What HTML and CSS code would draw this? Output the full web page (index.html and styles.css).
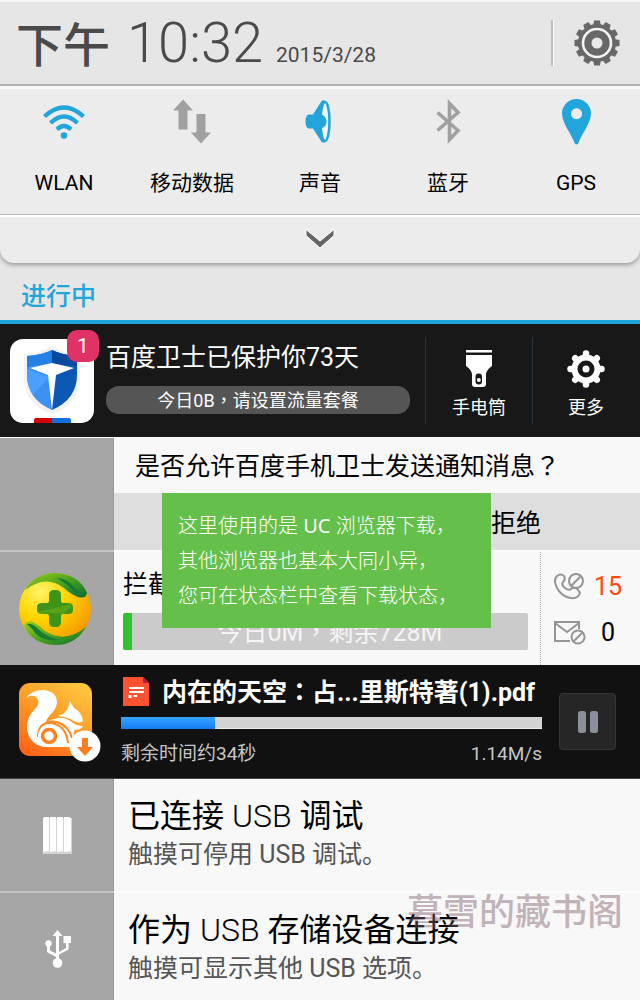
FILE: index.html
```html
<!DOCTYPE html>
<html lang="zh-CN">
<head>
<meta charset="utf-8">
<meta name="viewport" content="width=device-width, initial-scale=1">
<title>通知中心</title>
<link rel="stylesheet" href="styles.css">
</head>
<body>
<main class="shade">
  <header class="clock-bar">
    <span class="ampm">下午</span>
    <time class="clock">10:32</time>
    <span class="date">2015/3/28</span>
    <button class="settings" type="button" aria-label="设置">
      <svg width="46" height="46" viewBox="-23 -23 46 46">
        <g fill="#686868">
          <circle r="19"/>
          <g id="teeth"><path id="tooth" d="M-3.700-18l.8-4.500h5.800l.8 4.500z"/>
          <use href="#tooth" transform="rotate(30)"/><use href="#tooth" transform="rotate(60)"/></g>
          <use href="#teeth" transform="rotate(90)"/><use href="#teeth" transform="rotate(180)"/><use href="#teeth" transform="rotate(270)"/>
        </g>
        <circle r="14" fill="#686868" stroke="#f4f4f4" stroke-width="2.600"/>
        <circle r="5.500" fill="#e8e8e8"/>
      </svg>
    </button>
  </header>

  <section class="panel">
    <div class="toggles">
      <button class="toggle" type="button">
        <svg width="48" height="48" viewBox="0 0 48 48" fill="none" stroke="#22a5da" stroke-width="4.400">
          <path d="M4.500 15.500Q24-2.500 43.500 15.500"/><path d="M10.500 22Q24 9 37.500 22"/><path d="M17 28.500Q24 21.500 31 28.500"/><circle cx="24" cy="34.500" r="3.300" fill="#22a5da" stroke="none"/>
        </svg>
        <span>WLAN</span>
      </button>
      <button class="toggle" type="button">
        <svg width="48" height="48" viewBox="0 0 48 48" fill="#a0a0a0"><path d="M15-1.500l10 11h-5.500v19h-9v-19H5z"/><path d="M28.500 13h9v18.500H43l-10 11-10-11h5.500z"/></svg>
        <span>移动数据</span>
      </button>
      <button class="toggle" type="button">
        <svg width="48" height="48" viewBox="0 0 48 48"><path d="M12.500 13.500H17L26-.5h3v42h-3l-9-14h-4.500q-3-1-3-7t3-7z" fill="#22a5da"/><ellipse cx="29" cy="20.500" rx="4.500" ry="19.500" fill="#f4f6f7" stroke="#22a5da" stroke-width="2.500"/><path d="M24.500 14h2q4 2.500 4 6.500t-4 6.500h-2z" fill="#22a5da"/></svg>
        <span>声音</span>
      </button>
      <button class="toggle" type="button">
        <svg width="48" height="48" viewBox="0 0 48 48" fill="none" stroke="#a0a0a0" stroke-width="3.600"><path d="M13.500 11.500l20.500 18-8.500 9V2.500l8.500 9-20.500 18"/></svg>
        <span>蓝牙</span>
      </button>
      <button class="toggle" type="button">
        <svg width="48" height="48" viewBox="0 0 48 48"><path fill="#22a5da" fill-rule="evenodd" d="M24.500-2A14.500 14.500 0 0 1 39 12.500C39 22 28.500 35 26.500 42q-2 3-4 0C20.500 35 10 22 10 12.500A14.500 14.500 0 0 1 24.500-2zM24.500 7.200a5.500 5.500 0 1 0 .1 0z"/></svg>
        <span>GPS</span>
      </button>
    </div>
    <button class="expand" type="button" aria-label="展开">
      <svg width="30" height="20" viewBox="0 0 30 20"><path d="M1 .5l14 11.500L29 .5v6L15 19 1 6.500z" fill="#666" stroke="#fff" stroke-width="1"/></svg>
    </button>
  </section>

  <h2 class="section-title">进行中</h2>

  <section class="guard">
    <div class="guard-icon">
      <svg width="84" height="84" viewBox="0 0 84 84">
        <rect width="84" height="84" rx="13" fill="#fff"/>
        <path d="M42 7q11 7 28 8v27q-2 24-28 33-26-9-28-33V15q17-1 28-8z" fill="#f1f2f4"/>
        <path d="M42 11v60Q17 60 17 36V17q15-1 25-6z" fill="#3d91f0"/>
        <path d="M42 11v60q25-11 25-35V17q-15-1-25-6z" fill="#0b58b5"/>
        <path d="M42 11v13L17 28V17q15-1 25-6z" fill="#2580e4"/><path d="M42 11v13l25 4V17q-15-1-25-6z" fill="#084b9e"/>
        <path d="M17 30l22 8-16 18q-6-9-6-20z" fill="#4ba0ff"/>
        <path d="M20 29l22-5 22 5-18 7-4 35-4-35z" fill="#fff"/>
        <path d="M24 84v-3q0-2 2-2h16v5z" fill="#d50000"/><path d="M42 79h17q2 0 2 2v3H42z" fill="#1470dc"/>
      </svg>
      <span class="badge">1</span>
    </div>
    <div class="guard-text">
      <p class="line">百度卫士已保护你73天</p>
      <p class="pill">今日0B<span class="mid" lang="zh-Hant">，</span>请设置流量套餐</p>
    </div>
    <button class="action" type="button">
      <svg width="40" height="40" viewBox="0 0 40 40"><path d="M7 1h26v2.500H7zM7 6h26v11q-6 4-6 9v9q0 3-3 3h-8q-3 0-3-3v-9q0-5-6-9z" fill="#fff"/><rect x="16.500" y="24.500" width="6.500" height="11" rx="3.200" fill="#181818"/><circle cx="19.800" cy="31" r="2" fill="#fff"/></svg>
      <span>手电筒</span>
    </button>
    <button class="action" type="button">
      <svg width="40" height="40" viewBox="-20 -20 40 40"><g stroke="#fff" stroke-width="6.500" stroke-linecap="round"><path d="M0-15.500v31M-15.500 0h31M-10.800-10.800l21.600 21.600M10.800-10.800l-21.600 21.600"/></g><circle r="14.500" fill="#fff"/><circle r="6" fill="#fff" stroke="#181818" stroke-width="5"/></svg>
      <span>更多</span>
    </button>
  </section>

  <section class="row ask">
    <div class="side"></div>
    <div class="ask-body">
      <p class="question">是否允许百度手机卫士发送通知消息<span class="mid" lang="zh-Hant">？</span></p>
      <button class="deny" type="button">拒绝</button>
    </div>
    <aside class="tip">
      <p>这里使用的是 <span class="latin">UC</span> 浏览器下载，</p>
      <p>其他浏览器也基本大同小异，</p>
      <p>您可在状态栏中查看下载状态，</p>
    </aside>
  </section>

  <section class="row block">
    <div class="side">
      <svg width="74" height="74" viewBox="0 0 74 74">
        <defs><radialGradient id="gold" cx=".3" cy=".25" r=".8"><stop offset="0" stop-color="#fff36b"/><stop offset=".45" stop-color="#fdd800"/><stop offset="1" stop-color="#f59a00"/></radialGradient>
        <linearGradient id="leaf" x2="1" y2="1"><stop offset="0" stop-color="#9bcc1c"/><stop offset=".6" stop-color="#3b9a20"/><stop offset="1" stop-color="#0c6a37"/></linearGradient></defs>
        <circle cx="37" cy="37" r="36" fill="url(#gold)"/>
        <path d="M7 18Q17 1 37 1q24 1 32 20-1 6-9 4-8-3-14-9Q28 2 7 18z" fill="url(#leaf)"/>
        <path d="M38 6q10 0 17 8 5 6 12 8-4 3-10-1Q48 10 38 6z" fill="#187a32"/>
        <path d="M6 54q2-6 9-4 6 3 12 9 20 13 41-4Q58 73 37 73 14 72 6 54z" fill="url(#leaf)"/>
        <path d="M9 52q5-1 10 4 9 9 22 12-14 2-23-6-3-5-9-10z" fill="#187a32"/>
        <path d="M36 18h2q5 0 5 5v6q0 2 2 2h5q5 0 5 4v3q0 4-5 4h-5q-2 0-2 2v6q0 5-5 5h-2q-5 0-5-5v-6q0-2-2-2h-5q-5 0-5-4v-3q0-4 5-4h5q2 0 2-2v-6q0-5 5-5z" fill="#3f9418"/>
        <path d="M20 40l33-8v3l-8 7-14-1-7 1q-4 0-4-2z" fill="#82c01b" opacity=".35"/>
      </svg>
    </div>
    <div class="block-body">
      <p class="line">拦截</p>
      <div class="quota"><span>今日0M<span class="mid" lang="zh-Hant">，</span>剩余728M</span></div>
    </div>
    <div class="counts">
      <svg width="32" height="30" viewBox="0 0 32 30" fill="none" stroke="#959595" stroke-width="2"><path d="M3 4q4-3 7 0 2 3-1 6-2 3 2 6t6 1q4-3 7 1l2 3q-2 6-9 5Q8 25 3 16-1 8 3 4z"/><circle cx="22" cy="9" r="7"/><path d="M17 14L27 4"/></svg>
      <span class="hot">15</span>
      <svg width="32" height="30" viewBox="0 0 32 30" fill="none" stroke="#959595" stroke-width="2"><path d="M16 23H1V4h24v7M1 5l12 9L25 5"/><circle cx="24" cy="19" r="6.500"/><path d="M19 24l10-10"/></svg>
      <span>0</span>
    </div>
  </section>

  <section class="download">
    <div class="uc">
      <svg width="82" height="82" viewBox="0 0 82 82">
        <defs><linearGradient id="uc" x1=".8" y1="0" x2=".2" y2="1"><stop offset="0" stop-color="#ffc640"/><stop offset=".5" stop-color="#ff9a25"/><stop offset="1" stop-color="#ff6418"/></linearGradient></defs>
        <rect width="73" height="73" rx="11" fill="url(#uc)"/>
        <path d="M7 15Q13 7 24 7q14 1 14 13-1 6-6 11-5 5-5 9 6-5 14-4 10 1 15 10-2 9-5 18H24Q10 60 8 46 7 34 17 25q5-6 0-11-4-3-10 1z" fill="#fff"/>
        <path d="M39 33q8-3 10-8l2-7 4 7q8 4 9 13-4 3-9 0-6-4-16-5z" fill="#fff"/>
        <path d="M36 35q12-1 18 5 4 3 10 3-2 4-8 4-6-8-20-12z" fill="#fff"/>
        <path d="M19 54q0-15 13-14 15 2 17 20M22 43q8-6 16-4 12 4 15 16" fill="none" stroke="#ff8a22" stroke-width="2"/>
        <circle cx="30" cy="53" r="11" fill="#fff"/><circle cx="30" cy="53" r="6.500" fill="none" stroke="#ff801f" stroke-width="3.500"/>
        <circle cx="66" cy="63" r="15.500" fill="#fff"/><path d="M63 55h6v9h5l-8 9-8-9h5z" fill="#ff7d22"/>
      </svg>
    </div>
    <div class="dl-body">
      <div class="dl-title">
        <svg width="26" height="29" viewBox="0 0 26 29"><path d="M0 0h20l6 6v23H0z" fill="#ff5230"/><path d="M20 0l6 6h-6z" fill="#b31c3c"/><path d="M6 11h15M6 15h15M10.500 19H14" stroke="#fff" stroke-width="2"/><path d="M5.500 18h3v3h-3z" fill="#fff"/></svg>
        <strong>内在的天空<span class="mid" lang="zh-Hant">：</span>占...里斯特著(1).pdf</strong>
      </div>
      <div class="bar" role="progressbar" aria-label="下载进度" aria-valuenow="22"><div class="fill" style="width:22.4%"></div></div>
      <div class="dl-info"><span>剩余时间约34秒</span><span>1.14M/s</span></div>
    </div>
    <button class="pause" type="button" aria-label="暂停">
      <svg width="20" height="22" viewBox="0 0 20 22" fill="#8a9099"><rect width="8" height="22" rx="2.500"/><rect x="12" width="8" height="22" rx="2.500"/></svg>
    </button>
  </section>

  <section class="row usb">
    <div class="side">
      <svg width="30" height="38" viewBox="0 0 30 38"><path fill="#d5d5d5" d="M1 2h29v36H1z"/><path fill="#fff" d="M1 3q0-2 2-2h4v34l-6 1zM8 1h6v34l-6 1zM15 1h6v34l-6 1zM22 1h4q3 0 3 2v32l-7 1z"/></svg>
    </div>
    <div class="usb-body"><h3>已连接 <span>USB</span> 调试</h3><p>触摸可停用 USB 调试。</p></div>
  </section>

  <section class="row usb">
    <div class="side">
      <svg width="28" height="38" viewBox="0 0 28 38" fill="#fff"><path d="M14.500 0l5 6H16v16l7-4v-5h-2.500V6H28v7h-2.500v6.500L16 24.500V31h-3v-4l-9-5v-6h3v4.500l6 3V6H9.500z"/><circle cx="5.500" cy="13.500" r="3.200"/><circle cx="14.500" cy="33" r="4.800"/></svg>
    </div>
    <div class="usb-body"><h3>作为 <span>USB</span> 存储设备连接</h3><p>触摸可显示其他 USB 选项。</p></div>
    <span class="watermark">暮雪的藏书阁</span>
  </section>
</main>
</body>
</html>
```
FILE: styles.css
```css
* { box-sizing: border-box; }
body, p, h2, h3 { margin: 0; }
body {
  background: #e6e6e6;
  color: #000;
  font-family: Roboto, "Noto Sans CJK SC", sans-serif;
  overflow-x: hidden;
}
button { border: 0; padding: 0; background: none; color: inherit; font: inherit; }
svg { display: block; flex: none; overflow: visible; }
.mid { font-family: "Noto Sans CJK TC", sans-serif; }
.shade { height: 100vh; overflow: hidden; }

.clock-bar {
  display: flex;
  align-items: baseline;
  height: 86px;
  padding: 0 20px 0 16px;
  border-top: 2px solid #f6f6f6;
  border-bottom: 2px solid #b4b4b4;
  color: #4a4a4a;
  line-height: 82px;
}
.ampm { font-size: 47px; font-weight: 500; }
.clock { margin-left: 17px; font-size: 56px; font-weight: 300; }
.date { margin-left: 13px; font-size: 21px; }
.settings {
  align-self: center;
  margin-left: auto;
  padding-left: 21px;
  border-left: 2px solid #bdbdbd;
  box-shadow: inset 1px 0 #fff;
}

.panel {
  background: #ececec;
  border-top: 3px solid #f9f9f9;
  border-radius: 0 0 14px 14px;
  box-shadow: 0 2px 4px #999;
}
.toggles {
  display: grid;
  grid-template-columns: repeat(5, 1fr);
  height: 126px;
  padding-top: 12px;
  border-bottom: 1px solid #b9b9b9;
}
.toggle {
  display: flex;
  flex-direction: column;
  align-items: center;
  gap: 18px;
  font-size: 21px;
  line-height: 32px;
}
.expand {
  display: flex;
  justify-content: center;
  align-items: center;
  width: 100%;
  height: 48px;
  padding-bottom: 3px;
  border-top: 2px solid #fff;
}
.section-title {
  padding: 15px 21px 5px;
  border-bottom: 4px solid #1fa4dc;
  color: #22a5da;
  font-size: 25px;
  font-weight: 500;
  line-height: 37px;
}

.guard {
  display: flex;
  align-items: center;
  height: 113px;
  padding: 0 1px 0 10px;
  background: #181818;
  color: #fff;
}
.guard-icon { position: relative; }
.badge {
  position: absolute;
  top: -9px;
  right: -5px;
  width: 32px;
  border-radius: 10px;
  background: #e03264;
  font-size: 21px;
  line-height: 32px;
  text-align: center;
}
.guard-text { flex: 1; padding: 0 15px 4px 12px; }
.line { font-size: 25px; line-height: 36px; white-space: nowrap; }
.guard .line { margin-top: -4px; }
.pill {
  margin-top: 10px;
  border-radius: 13px;
  background: #555;
  font-size: 18px;
  line-height: 26px;
  text-align: center;
}
.action {
  display: flex;
  flex-direction: column;
  align-items: center;
  gap: 6px;
  width: 107px;
  height: 87px;
  padding-top: 12px;
  border-left: 1px solid #26333d;
  font-size: 18px;
  line-height: 26px;
}

.row { position: relative; display: flex; height: 114px; background: #f8f8f8; border-bottom: 2px solid #fdfdfd; }
.side {
  display: flex;
  justify-content: center;
  align-items: center;
  flex: none;
  width: 114px;
  border-right: 1px solid #989898;
  background: #a6a6a6;
}
.row + .row .side { box-shadow: 0 -2px #c4c4c4; }
.ask { height: 115px; border-top: 1px solid #fff; }
.ask-body { display: flex; flex-direction: column; flex: 1; }
.question { padding-left: 21px; font-size: 25px; line-height: 53px; white-space: nowrap; }
.deny { flex: 1; padding: 0 0 2px 377px; background: #dedede; font-size: 25px; text-align: left; }
.tip {
  position: absolute;
  z-index: 1;
  top: 55px;
  left: 162px;
  width: 329px;
  padding: 15px 0 15px 16px;
  background: #65bf4b;
  color: #fff;
  font-family: "Noto Sans", "Noto Sans CJK SC", sans-serif;
  font-size: 20px;
  font-weight: 300;
  line-height: 35px;
  white-space: nowrap;
}
.latin { font-weight: 400; }

.block { height: 113px; border-bottom: 0; }
.block .side { padding-right: 4px; }
.block-body { flex: 1; padding: 15px 12px 0 9px; }
.quota {
  margin-top: 10px;
  border-left: 9px solid #30c330;
  border-radius: 2px;
  background: #cbcbcb;
  color: #f5f5f5;
  font-size: 25px;
  line-height: 35px;
  text-align: center;
}
.counts {
  display: grid;
  grid-template-columns: 32px 1fr;
  gap: 14px 0;
  align-content: center;
  align-items: center;
  width: 100px;
  padding: 2px 18px 0 13px;
  border-left: 1px dotted #aaa;
  font-size: 25px;
  line-height: 32px;
  text-align: center;
}
.counts span { padding-left: 8px; }
.hot { color: #ff4a0a; }

.download {
  display: flex;
  align-items: center;
  height: 114px;
  padding: 0 24px 0 19px;
  border-bottom: 1px solid #444;
  background: #111;
  color: #fff;
}
.uc { width: 102px; padding-top: 4px; }
.dl-body { flex: 1; min-width: 0; padding-bottom: 3px; }
.dl-title { display: flex; align-items: center; gap: 13px; padding-left: 2px; font-size: 25px; line-height: 36px; white-space: nowrap; }
.bar { height: 12px; margin: 6px 0 11px; background: #d3d3d3; border-bottom: 1px solid #eee; }
.fill { height: 12px; background: linear-gradient(#38a5ff, #147cf5); }
.dl-info { display: flex; justify-content: space-between; color: #c6c6c6; font-size: 19px; line-height: 28px; }
.pause {
  display: grid;
  place-items: center;
  width: 57px;
  height: 57px;
  margin-left: 17px;
  border: 1px solid #353535;
  border-radius: 4px;
  background: #262626;
}

.usb-body { padding: 15px 0 0 14px; white-space: nowrap; }
.usb-body h3 { font-size: 32px; font-weight: 400; line-height: 44px; }
.usb-body h3 span { font-weight: 300; }
.usb-body p { color: #555; font-size: 25px; line-height: 34px; }
.watermark {
  position: absolute;
  top: -3px;
  right: 17px;
  color: #80606a;
  font-size: 36px;
  font-weight: 500;
  line-height: 46px;
  opacity: .45;
}
```
